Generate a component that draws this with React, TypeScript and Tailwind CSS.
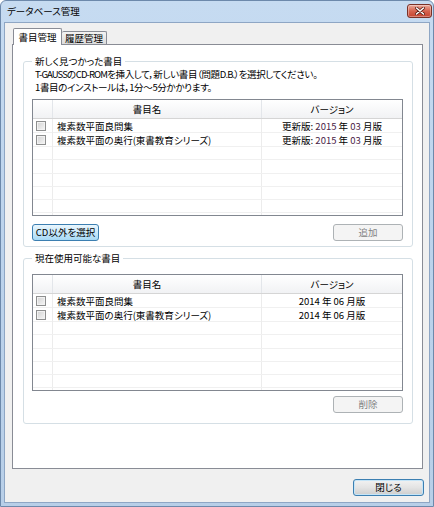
import { useState } from "react";

type Shomoku = {
  name: string;
  version: React.ReactNode;
};

const rowHeights = [
  "h-[14px]",
  "h-[14px]",
  "h-[13px]",
  "h-[14px]",
  "h-[13px]",
  "h-[13px]",
  "h-[13px]",
];

function Num({ children }: { children: React.ReactNode }) {
  return <span className="text-[#4a2448]">{children}</span>;
}

// 英数字は詰め気味に
function Lat({ children }: { children: React.ReactNode }) {
  return <span className="tracking-[-0.9px]">{children}</span>;
}

function Checkbox() {
  return (
    <span className="block w-[10px] h-[10px] border border-[#8e8f8f] bg-gradient-to-br from-[#d2d2d2] to-[#f6f6f6] shadow-[inset_0_0_0_1px_#f2f2f2]" />
  );
}

function ListView({ items }: { items: Shomoku[] }) {
  return (
    <div className="h-[117px] border border-[#828790] bg-white flex flex-col overflow-hidden">
      <div className="grid grid-cols-[20px_209px_1fr] h-[19px] shrink-0 border-b border-[#d5d5d5] bg-gradient-to-b from-white to-[#f1f2f4]">
        <div className="border-r border-[#e3e6ea]" />
        <div className="border-r border-[#e3e6ea] flex items-center justify-center pr-[20px]">
          書目名
        </div>
        <div className="flex items-center justify-center">バージョン</div>
      </div>
      {rowHeights.map((h, i) => {
        const item = items[i];
        return (
          <div
            key={i}
            className={`grid grid-cols-[20px_209px_1fr] ${h} shrink-0 border-b border-[#f0f0f0]`}
          >
            <div className="border-r border-[#ececec] flex items-center pl-[3px]">
              {item && <Checkbox />}
            </div>
            <div className="border-r border-[#ececec] flex items-center pl-[4px] whitespace-nowrap">
              {item?.name}
            </div>
            <div className="flex items-center justify-center whitespace-pre">
              <span>{item?.version}</span>
            </div>
          </div>
        );
      })}
      <div className="grid grid-cols-[20px_209px_1fr] flex-1">
        <div className="border-r border-[#ececec]" />
        <div className="border-r border-[#ececec]" />
        <div />
      </div>
    </div>
  );
}

function Button({
  label,
  variant = "normal",
  className = "",
}: {
  label: string;
  variant?: "normal" | "hot" | "default" | "disabled";
  className?: string;
}) {
  const styles = {
    normal:
      "border-[#707070] bg-gradient-to-b from-[#f2f2f2] via-[#e6e6e6] to-[#cfcfcf] text-black",
    hot: "border-[#3c7fb1] bg-gradient-to-b from-[#eaf6fd] via-[#c9e9fb] to-[#a7d9f5] text-black",
    default:
      "border-[#3c7fb1] bg-gradient-to-b from-[#f2f2f2] via-[#e4e4e4] to-[#cdcdcd] text-black shadow-[inset_0_0_0_1px_#c5e5f8]",
    disabled: "border-[#adb2b5] bg-[#f4f4f4] text-[#838383]",
  };
  return (
    <button
      type="button"
      className={`h-[17px] rounded-[3px] border flex items-center justify-center leading-none ${styles[variant]} ${className}`}
    >
      {label}
    </button>
  );
}

function GroupBox({
  title,
  children,
  className = "",
}: {
  title: string;
  children: React.ReactNode;
  className?: string;
}) {
  return (
    <fieldset
      className={`border border-[#d5dfe5] rounded-[3px] pl-[8px] pr-[9px] ${className}`}
    >
      <legend className="px-[3px] leading-[12px]">{title}</legend>
      {children}
    </fieldset>
  );
}

export default function App() {
  const [tab, setTab] = useState<"books" | "history">("books");

  const updated = (
    <>
      更新版: <Num>2015</Num> 年 <Num>03</Num> 月版
    </>
  );

  const found: Shomoku[] = [
    { name: "複素数平面良問集", version: updated },
    { name: "複素数平面の奥行(東書教育シリーズ)", version: updated },
  ];

  const installed: Shomoku[] = [
    { name: "複素数平面良問集", version: "2014 年 06 月版" },
    { name: "複素数平面の奥行(東書教育シリーズ)", version: "2014 年 06 月版" },
  ];

  return (
    <div className="w-[434px] h-[507px] font-['Noto_Sans_CJK_JP',sans-serif] text-[9.5px] text-black [font-feature-settings:'palt'] overflow-hidden">
      {/* ウィンドウ枠 */}
      <div className="h-full border border-[#6d89ab] rounded-t-[6px] bg-gradient-to-b from-[#c6dbf1] via-[#bcd3ec] to-[#b8cfe8] flex flex-col px-[3px] pb-[3px]">
        {/* タイトルバー */}
        <div className="h-[21px] shrink-0 flex items-start justify-between pl-[3px] -mr-[2px]">
          <span className="mt-[4px] leading-[12px]">データベース管理</span>
          <button
            type="button"
            className="mt-[3px] w-[25px] h-[14px] rounded-[3px] border border-[#7a3127] bg-gradient-to-b from-[#e9a99c] via-[#d6634f] to-[#c5432f] flex items-center justify-center shadow-[inset_0_0_0_1px_rgba(255,255,255,0.35)]"
          >
            <svg width="10" height="8" viewBox="0 0 10 8">
              <path
                d="M1.5 1 L8.5 7 M8.5 1 L1.5 7"
                stroke="#5a1c14"
                strokeWidth="3"
                strokeLinecap="round"
              />
              <path
                d="M1.5 1 L8.5 7 M8.5 1 L1.5 7"
                stroke="#ffffff"
                strokeWidth="1.6"
                strokeLinecap="round"
              />
            </svg>
          </button>
        </div>

        {/* 本体 */}
        <div className="flex-1 border border-[#8ea6c4] bg-[#f0f0f0] flex flex-col pt-[5px] pb-[5px] pl-[7px] pr-[5px]">
          {/* タブ */}
          <div className="flex items-end h-[16px] pl-[1px] shrink-0">
            <button
              type="button"
              onClick={() => setTab("books")}
              className={
                tab === "books"
                  ? "relative z-10 h-[17px] w-[49px] -mb-px border border-b-0 border-[#898c95] bg-white rounded-t-[2px] flex items-start justify-center pt-[2px] leading-[12px]"
                  : "h-[13px] w-[45px] border border-b-0 border-[#898c95] bg-gradient-to-b from-[#f3f3f3] to-[#dcdcdc] rounded-t-[2px] flex items-center justify-center leading-[12px]"
              }
            >
              書目管理
            </button>
            <button
              type="button"
              onClick={() => setTab("history")}
              className={
                tab === "history"
                  ? "relative z-10 h-[17px] w-[49px] -mb-px border border-b-0 border-[#898c95] bg-white rounded-t-[2px] flex items-start justify-center pt-[2px] leading-[12px]"
                  : "h-[13px] w-[45px] border border-l-0 border-b-0 border-[#898c95] bg-gradient-to-b from-[#f3f3f3] to-[#dcdcdc] rounded-t-[2px] flex items-center justify-center leading-[12px]"
              }
            >
              履歴管理
            </button>
          </div>

          {/* タブページ */}
          <div className="h-[425px] w-[411px] shrink-0 border border-[#898c95] bg-white pt-[10px] pl-[10px] pr-[9px]">
            <GroupBox title="新しく見つかった書目" className="pt-px pb-[5px]">
              <p className="pl-[3px] leading-[13px] tracking-[-0.35px] whitespace-nowrap">
                <Lat>T-GAUSS</Lat>の<Lat>CD-ROM</Lat>を挿入して，新しい書目（問題<Lat>D.B.</Lat>）を選択してください。
                <br />
                1書目のインストールは，1分～5分かかります。
              </p>
              <div className="mt-[5px]">
                <ListView items={found} />
              </div>
              <div className="mt-[8px] flex justify-between">
                <Button label="CD以外を選択" variant="hot" className="w-[67px]" />
                <Button label="追加" variant="disabled" className="w-[70px]" />
              </div>
            </GroupBox>

            <GroupBox title="現在使用可能な書目" className="mt-[5px] pt-[10px] pb-[10px]">
              <ListView items={installed} />
              <div className="mt-[5px] flex justify-end">
                <Button label="削除" variant="disabled" className="w-[70px]" />
              </div>
            </GroupBox>
          </div>

          {/* 閉じる */}
          <div className="mt-[10px] flex justify-end">
            <Button label="閉じる" variant="default" className="w-[71px]" />
          </div>
        </div>
      </div>
    </div>
  );
}
